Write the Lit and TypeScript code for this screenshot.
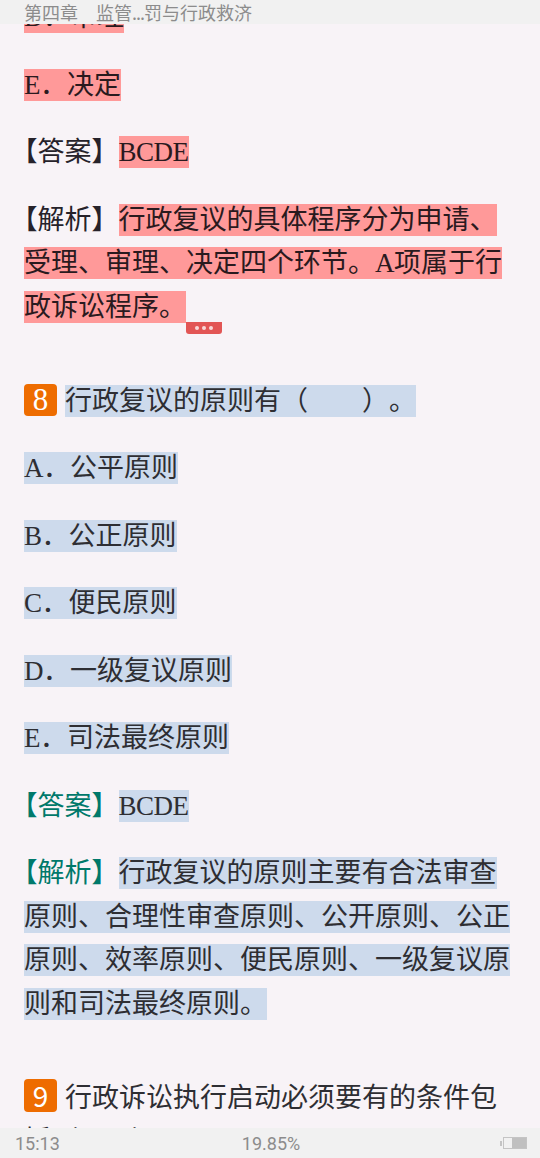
import { LitElement, html, css } from "lit";
import { customElement } from "lit/decorators.js";

@customElement("app-root")
export class AppRoot extends LitElement {
  static styles = css`
    :host {
      display: flex;
      flex-direction: column;
      width: 540px;
      height: 1158px;
      overflow: hidden;
      background: #f8f3f7;
      font-family: "Liberation Serif", "Noto Sans CJK SC", serif;
      color: #2e2e33;
      text-spacing-trim: space-all;
    }
    .top {
      height: 24px;
      flex: none;
      background: #f1f1f1;
      color: #8c8c8c;
      font-family: "Noto Sans CJK SC", sans-serif;
      font-size: 18px;
      line-height: 24px;
      padding-left: 24px;
      white-space: pre;
    }
    .top span { letter-spacing: -1px; }
    .view {
      flex: 1;
      min-height: 0;
      overflow: hidden;
    }
    .flow {
      margin-top: -28px;
      padding: 0 24px;
      font-size: 27px;
    }
    p {
      margin: 0 0 24px;
      line-height: 43.5px;
    }
    .r, .b {
      padding: 1px 0;
      -webkit-box-decoration-break: clone;
      box-decoration-break: clone;
    }
    .r { background: #ff9999; color: #2a1a1e; }
    .b { background: #cddaec; }
    .teal { color: #00796b; }
    .dark { color: #26222a; }
    .lb { font-feature-settings: "halt"; }
    .lt { letter-spacing: -0.5px; }
    .badge {
      display: inline-block;
      width: 33px;
      height: 32px;
      margin-right: 8px;
      border-radius: 4px;
      background: #ee6c00;
      color: #fff;
      text-align: center;
      font-size: 31px;
      line-height: 32px;
      vertical-align: 0;
    }
    .sans {
      font-family: "Noto Sans CJK SC", sans-serif;
      font-size: 28px;
      height: 33px;
      line-height: 33px;
    }
    .q { margin-top: 50.5px; }
    .more-wrap { position: relative; }
    .more {
      position: absolute;
      display: inline-flex;
      align-items: center;
      justify-content: center;
      gap: 3px;
      width: 36px;
      height: 12px;
      top: 30px;
      left: 0;
      background: #e25555;
      border-radius: 0 0 3px 3px;
    }
    .more i {
      width: 4px;
      height: 4px;
      border-radius: 50%;
      background: #f8d8d8;
    }
    .bottom {
      height: 30px;
      flex: none;
      background: #f1f1f1;
      color: #8c8c8c;
      font-size: 18px;
      display: grid;
      grid-template-columns: 1fr 1fr 1fr;
      align-items: center;
      padding: 0 13px 0 15px;
      font-family: "Roboto", sans-serif;
    }
    .pct { text-align: center; }
    .bat { justify-self: end; display: flex; align-items: center; gap: 1px; }
    .nub { width: 2px; height: 5px; background: #c4c4c4; }
    .cell {
      width: 24px;
      height: 12px;
      border: 1px solid #c4c4c4;
      display: flex;
      justify-content: flex-end;
      box-sizing: border-box;
    }
    .cell b { width: 14px; background: #c0c0c0; }
  `;

  private label(name: string) {
    return html`<span class="lb">【</span>${name}】`;
  }

  private opt(letter: string, text: string) {
    return html`<span class="lt">${letter}</span>．${text}`;
  }

  render() {
    return html`
      <div class="top">第四章　监管<span>...</span>罚与行政救济</div>
      <div class="view">
        <div class="flow">
          <p class="dark"><span class="r">${this.opt("D", "审理")}</span></p>
          <p class="dark"><span class="r">${this.opt("E", "决定")}</span></p>
          <p class="dark">${this.label("答案")}<span class="r lt">BCDE</span></p>
          <p class="dark">
            ${this.label("解析")}<span class="r">行政复议的具体程序分为申请、受理、审理、决定四个环节。<span class="lt">A</span>项属于行政诉讼程序。</span><span class="more-wrap"><span class="more"><i></i><i></i><i></i></span></span>
          </p>
          <p class="q">
            <span class="badge">8</span><span class="b">行政复议的原则有（　　）。</span>
          </p>
          <p><span class="b">${this.opt("A", "公平原则")}</span></p>
          <p><span class="b">${this.opt("B", "公正原则")}</span></p>
          <p><span class="b">${this.opt("C", "便民原则")}</span></p>
          <p><span class="b">${this.opt("D", "一级复议原则")}</span></p>
          <p><span class="b">${this.opt("E", "司法最终原则")}</span></p>
          <p><span class="teal">${this.label("答案")}</span><span class="b lt">BCDE</span></p>
          <p>
            <span class="teal">${this.label("解析")}</span><span class="b">行政复议的原则主要有合法审查原则、合理性审查原则、公开原则、公正原则、效率原则、便民原则、一级复议原则和司法最终原则。</span>
          </p>
          <p class="q">
            <span class="badge sans">9</span>行政诉讼执行启动必须要有的条件包括（　　）。
          </p>
        </div>
      </div>
      <div class="bottom">
        <span>15:13</span>
        <span class="pct">19.85%</span>
        <span class="bat"><span class="nub"></span><span class="cell"><b></b></span></span>
      </div>
    `;
  }
}
